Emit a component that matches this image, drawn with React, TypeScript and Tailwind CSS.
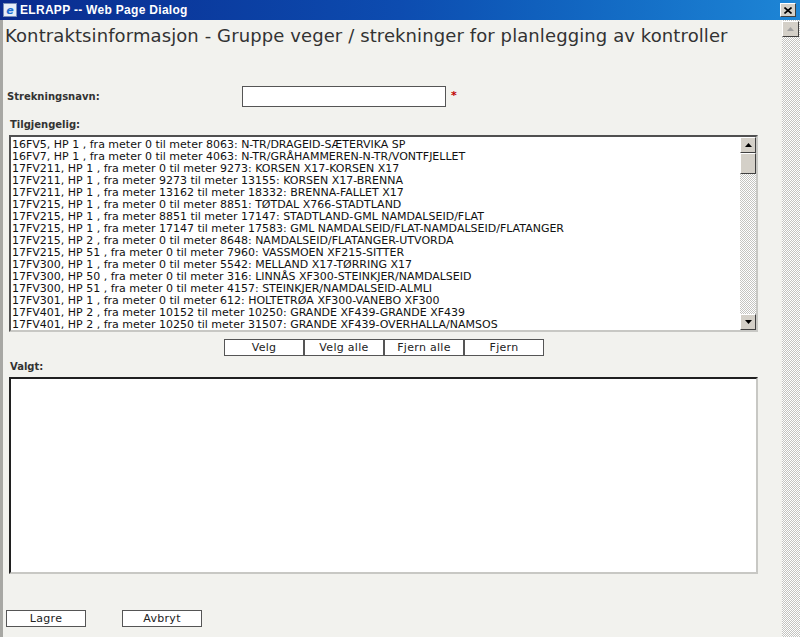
const items = [
  "16FV5, HP 1 , fra meter 0 til meter 8063: N-TR/DRAGEID-SÆTERVIKA SP",
  "16FV7, HP 1 , fra meter 0 til meter 4063: N-TR/GRÅHAMMEREN-N-TR/VONTFJELLET",
  "17FV211, HP 1 , fra meter 0 til meter 9273: KORSEN X17-KORSEN X17",
  "17FV211, HP 1 , fra meter 9273 til meter 13155: KORSEN X17-BRENNA",
  "17FV211, HP 1 , fra meter 13162 til meter 18332: BRENNA-FALLET X17",
  "17FV215, HP 1 , fra meter 0 til meter 8851: TØTDAL X766-STADTLAND",
  "17FV215, HP 1 , fra meter 8851 til meter 17147: STADTLAND-GML NAMDALSEID/FLAT",
  "17FV215, HP 1 , fra meter 17147 til meter 17583: GML NAMDALSEID/FLAT-NAMDALSEID/FLATANGER",
  "17FV215, HP 2 , fra meter 0 til meter 8648: NAMDALSEID/FLATANGER-UTVORDA",
  "17FV215, HP 51 , fra meter 0 til meter 7960: VASSMOEN XF215-SITTER",
  "17FV300, HP 1 , fra meter 0 til meter 5542: MELLAND X17-TØRRING X17",
  "17FV300, HP 50 , fra meter 0 til meter 316: LINNÅS XF300-STEINKJER/NAMDALSEID",
  "17FV300, HP 51 , fra meter 0 til meter 4157: STEINKJER/NAMDALSEID-ALMLI",
  "17FV301, HP 1 , fra meter 0 til meter 612: HOLTETRØA XF300-VANEBO XF300",
  "17FV401, HP 2 , fra meter 10152 til meter 10250: GRANDE XF439-GRANDE XF439",
  "17FV401, HP 2 , fra meter 10250 til meter 31507: GRANDE XF439-OVERHALLA/NAMSOS",
];

function ArrowButton({ up }: { up?: boolean }) {
  return (
    <div className="w-4 h-4 bg-[#d4d0c8] border border-t-white border-l-white border-r-[#404040] border-b-[#404040] flex items-center justify-center">
      <svg width="7" height="4" viewBox="0 0 7 4">
        {up ? (
          <polygon points="3.5,0 7,4 0,4" fill="#000" />
        ) : (
          <polygon points="0,0 7,0 3.5,4" fill="#000" />
        )}
      </svg>
    </div>
  );
}

function Btn({ label }: { label: string }) {
  return (
    <button
      type="button"
      className="w-20 h-[17px] bg-white border border-[#555] text-[11px] leading-[15px] text-[#222] text-center tracking-[0.3px]"
    >
      {label}
    </button>
  );
}

export default function App() {
  return (
    <div className="w-[800px] h-[637px] overflow-hidden flex flex-col bg-[#f2f2ee] font-['DejaVu_Sans',sans-serif]">
      {/* title bar */}
      <div className="h-[20px] shrink-0 flex items-center bg-gradient-to-r from-[#0a2a8e] via-[#0d4cb0] to-[#1e86d6] pl-[3px] pr-[4px]">
        <div className="w-[14px] h-[14px] bg-[#e8eef8] border border-[#7a8fb8] flex items-center justify-center">
          <span className="text-[11px] leading-none font-bold text-[#1d6fd1] italic">e</span>
        </div>
        <span className="ml-[3px] text-white text-[12px] font-bold tracking-[0.3px] font-['Liberation_Sans',sans-serif]">
          ELRAPP -- Web Page Dialog
        </span>
        <div className="ml-auto w-[16px] h-[14px] bg-[#d4d0c8] border border-t-white border-l-white border-r-[#404040] border-b-[#404040] flex items-center justify-center">
          <svg width="8" height="7" viewBox="0 0 8 7">
            <path d="M0.5 0.5 L7.5 6.5 M7.5 0.5 L0.5 6.5" stroke="#000" strokeWidth="1.6" />
          </svg>
        </div>
      </div>

      <div className="flex flex-1 min-h-0">
        {/* content */}
        <div className="flex-1 border-l-[3px] border-l-[#a8a8a4] pl-[2px] pr-[24px] flex flex-col">
          <h1 className="mt-[5px] text-[18px] leading-[22px] tracking-[0.1px] text-[#333] whitespace-nowrap">
            Kontraktsinformasjon - Gruppe veger / strekninger for planlegging av kontroller
          </h1>

          <div className="mt-[39px] flex items-center h-[21px]">
            <span className="w-[237px] pl-[2px] text-[10px] font-bold text-[#333]">Strekningsnavn:</span>
            <div className="w-[204px] h-[21px] bg-white border border-[#555]" />
            <span className="ml-[5px] text-[11px] text-[#c00000] font-bold">*</span>
          </div>

          <div className="mt-[12px] pl-[5px] text-[10px] leading-[12px] font-bold text-[#333]">Tilgjengelig:</div>

          <div className="mt-[4px] ml-[4px] h-[197px] flex border-2 border-t-[#505050] border-l-[#505050] border-r-[#c8c8c4] border-b-[#c8c8c4] bg-white">
            <div className="flex-1 pt-[2px] pl-[1px] overflow-hidden">
              {items.map((t) => (
                <div key={t} className="text-[11px] leading-[12px] text-[#111] whitespace-nowrap">
                  {t}
                </div>
              ))}
            </div>
            <div className="w-4 flex flex-col bg-[image:repeating-conic-gradient(#c4c4c0_0_25%,#ffffff_0_50%)] bg-[length:2px_2px]">
              <ArrowButton up />
              <div className="h-[21px] bg-[#d4d0c8] border border-t-white border-l-white border-r-[#404040] border-b-[#404040]" />
              <div className="flex-1" />
              <ArrowButton />
            </div>
          </div>

          <div className="mt-[7px] ml-[219px] flex">
            <Btn label="Velg" />
            <Btn label="Velg alle" />
            <Btn label="Fjern alle" />
            <Btn label="Fjern" />
          </div>

          <div className="mt-[5px] pl-[5px] text-[10px] leading-[12px] font-bold text-[#333]">Valgt:</div>

          <div className="mt-[4px] ml-[4px] h-[197px] bg-white border-2 border-t-[#202020] border-l-[#202020] border-r-[#c8c8c4] border-b-[#c8c8c4]" />

          <div className="mt-[36px] ml-[1px] flex gap-[36px]">
            <Btn label="Lagre" />
            <Btn label="Avbryt" />
          </div>
        </div>

        {/* window scrollbar */}
        <div className="w-[18px] shrink-0 flex flex-col bg-[image:repeating-conic-gradient(#c4c4c0_0_25%,#ffffff_0_50%)] bg-[length:2px_2px] pt-[1px]">
          <div className="w-[17px] h-[16px] bg-[#d4d0c8] border border-t-white border-l-white border-r-[#404040] border-b-[#404040] flex items-center justify-center">
            <svg width="7" height="4" viewBox="0 0 7 4">
              <polygon points="3.5,0 7,4 0,4" fill="#a0a0a0" />
            </svg>
          </div>
        </div>
      </div>
    </div>
  );
}
